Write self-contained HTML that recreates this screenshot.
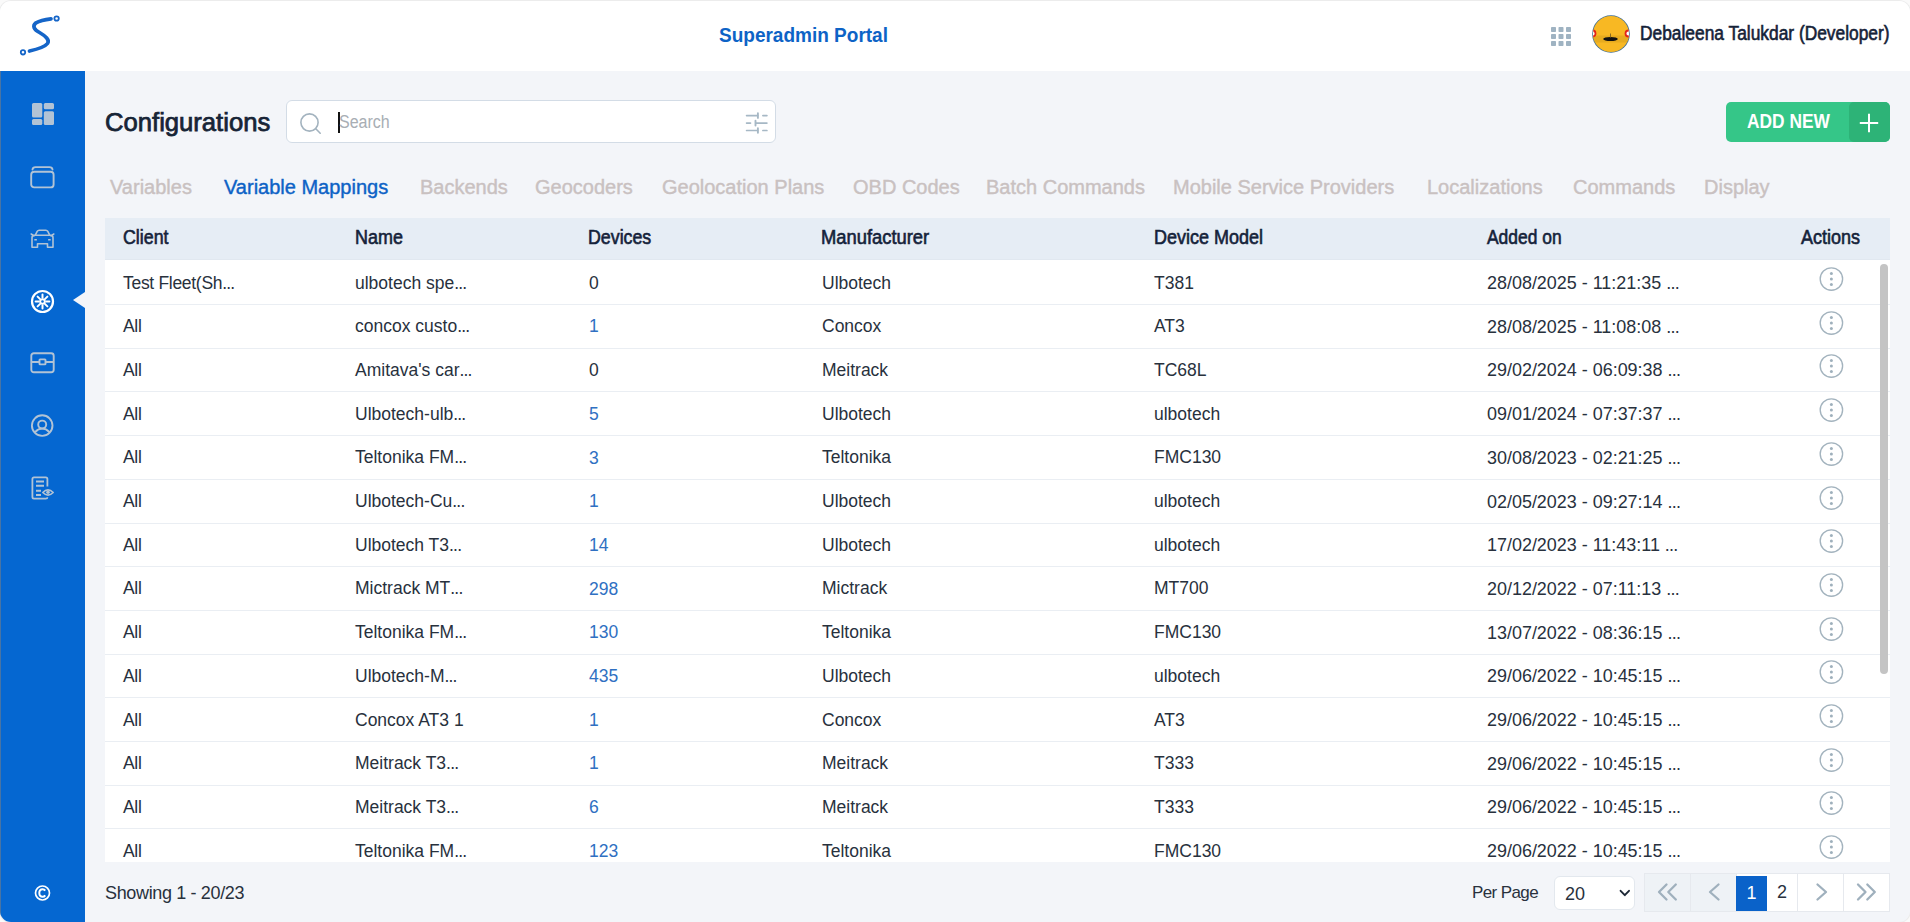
<!DOCTYPE html>
<html><head><meta charset="utf-8">
<style>
*{box-sizing:border-box;margin:0;padding:0}
html,body{width:1910px;height:922px;overflow:hidden;background:#fafafa;font-family:"Liberation Sans",sans-serif;color:#1f2a37}
#app{position:absolute;left:0;top:1px;width:1910px;height:921px;border-radius:11px;overflow:hidden;background:#f3f5f9;box-shadow:0 0 0 1px #ececec}
#hdr{position:absolute;left:0;top:0;width:1910px;height:70px;background:#fff}
#side{position:absolute;left:0;top:70px;width:85px;height:851px;background:#0567d1}
#ledge{position:absolute;left:0;top:70px;width:1px;height:851px;background:rgba(128,128,128,0.55)}
.abs{position:absolute;white-space:nowrap}
.title{left:719px;top:22px;font-size:21px;font-weight:bold;color:#0d63c6;transform:scaleX(0.905);transform-origin:0 0}
.uname{left:1640px;top:20.5px;font-size:19.5px;color:#152238;-webkit-text-stroke:0.6px #152238;transform:scaleX(0.89);transform-origin:0 0}
.conf{left:105px;top:106.8px;font-size:25px;color:#172436;-webkit-text-stroke:0.75px #172436;transform:scaleX(1.025);transform-origin:0 0}
#search{position:absolute;left:286px;top:99px;width:490px;height:42.5px;background:#fff;border:1px solid #d3dce6;border-radius:6px}
#addnew{position:absolute;left:1726px;top:100.5px;width:164px;height:40px;background:#35c688;border-radius:5px;overflow:hidden}
#addnew .t{position:absolute;left:20.5px;top:8.5px;font-size:19.5px;font-weight:bold;color:#fff;transform:scaleX(0.89);transform-origin:0 0}
#addnew .p{position:absolute;right:0;top:0;width:41px;height:40px;background:#2db377;border-radius:5px}
.tab{position:absolute;top:175px;font-size:20px;color:#c9c1c1;-webkit-text-stroke:0.4px #c9c1c1}
.tab.act{color:#0d62c6;-webkit-text-stroke:0.4px #0d62c6}
#thead{position:absolute;left:105px;top:217px;width:1785px;height:42px;background:#e6edf5;border-bottom:1px solid #e1e8f0}
.th{position:absolute;top:8px;font-size:19.5px;color:#14223a;-webkit-text-stroke:0.6px #14223a;transform-origin:0 0}
#tbody{position:absolute;left:105px;top:259px;width:1785px;height:602px;background:#fff;overflow:hidden}
.row{position:absolute;left:0;width:1785px;height:44px;border-bottom:1px solid #eaeef3}
.td{position:absolute;top:11.5px;font-size:17.5px;color:#28313d}
.td i{font-style:normal;letter-spacing:-0.8px}
.c6{font-size:19px;top:11px !important;transform:scaleX(0.944);transform-origin:0 0}
.c1{letter-spacing:-0.3px}
.td.b{color:#2f70c2}
.c1{left:18px}.c2{left:250px}.c3{left:484px;top:11.8px}.c4{left:717px}.c5{left:1049px}.c6{left:1382px}
.ai{position:absolute;left:1713px;top:5px}
#sb{position:absolute;left:1775px;top:4px;width:8px;height:410px;background:#c4c4c4;border-radius:4px}
.foot{position:absolute;font-size:17px;color:#28313d}
#sel{position:absolute;left:1554px;top:875px;width:81px;height:34px;background:#fff;border:1px solid #e3e8ee;border-radius:6px}
#pag{position:absolute;left:1644px;top:872px;width:246px;height:39px;border:1px solid #e6e9ee;background:#fff}
.pb{position:absolute;top:0;height:37px;border-right:1px solid #e6e9ee;text-align:center;font-size:18px;line-height:37px;color:#28313d}
.pb.dis{background:#eef2f6}
.pb.on{background:#0a62c9;color:#fff;top:2px;height:35px;line-height:34px;border-right:none}
</style></head>
<body>
<div id="app">
  <div id="hdr">
    <svg class="abs" style="left:0;top:0" width="80" height="70" viewBox="0 0 80 70">
      <path d="M29.5 50 C36 48.5 44.5 46.5 47.5 42.5 C50 39 45.5 35 39.5 31.5 C34 28.5 32 25 36 21.8 C40 19.5 45.5 18.5 51 17.8" fill="none" stroke="#1565c8" stroke-width="3.7" stroke-linecap="round"/>
      <circle cx="23" cy="51.3" r="2.2" fill="none" stroke="#1565c8" stroke-width="1.8"/>
      <circle cx="56.6" cy="17.5" r="2.2" fill="none" stroke="#1565c8" stroke-width="1.8"/>
    </svg>
    <div class="abs title">Superadmin Portal</div>
    <svg class="abs" style="left:1550.5px;top:24.5px" width="21" height="21" viewBox="0 0 21 21">
      <g fill="#9fb3c2">
        <rect x="0" y="1" width="5" height="5" rx="0.8"/><rect x="7.5" y="1" width="5" height="5" rx="0.8"/><rect x="15" y="1" width="5" height="5" rx="0.8"/>
        <rect x="0" y="8" width="5" height="5" rx="0.8"/><rect x="7.5" y="8" width="5" height="5" rx="0.8"/><rect x="15" y="8" width="5" height="5" rx="0.8"/>
        <rect x="0" y="15" width="5" height="5" rx="0.8"/><rect x="7.5" y="15" width="5" height="5" rx="0.8"/><rect x="15" y="15" width="5" height="5" rx="0.8"/>
      </g>
    </svg>
    <div class="abs" style="left:1592.5px;top:14.5px;width:36px;height:36px;border-radius:50%;overflow:hidden;background:#f8b823;box-shadow:0 0 0 0.8px #3d6c94">
      <svg class="abs" style="left:-1.5px;top:-1.5px" width="39" height="39" viewBox="0 0 39 39">
        <rect x="0" y="21.5" width="39" height="7" fill="#d9a01e" opacity="0.55"/>
        <ellipse cx="19.5" cy="25" rx="7.3" ry="2" fill="#111"/>
        <rect x="19" y="19.5" width="1" height="4" fill="#8a6a20"/>
        <circle cx="1.5" cy="19.5" r="3" fill="#fff" stroke="#e2231a" stroke-width="1.8"/>
        <circle cx="37.5" cy="19.5" r="3" fill="#fff" stroke="#e2231a" stroke-width="1.8"/>
      </svg></div>
    <div class="abs uname">Debaleena Talukdar (Developer)</div>
  </div>

  <div id="side">
    <svg class="abs" style="left:31px;top:31px" width="24" height="24" viewBox="0 0 24 24"><g fill="#b2c3d5">
      <rect x="1" y="1" width="10.3" height="14.4" rx="1.5"/><rect x="1" y="17" width="10.3" height="6" rx="1.5"/>
      <rect x="12.8" y="1" width="10.2" height="6.2" rx="1.5"/><rect x="12.8" y="9.2" width="10.2" height="13.8" rx="1.5"/></g></svg>
    <svg class="abs" style="left:30px;top:95px" width="25" height="24" viewBox="0 0 25 24"><g fill="none" stroke="#b2c3d5" stroke-width="1.9">
      <rect x="1.2" y="5.8" width="22.4" height="15.6" rx="3"/><path d="M2.5 3.5 Q2.8 1.1 5.5 1.1 H19.5 Q22.2 1.1 22.5 3.5" stroke-linecap="round"/></g></svg>
    <svg class="abs" style="left:30px;top:158px" width="25" height="20" viewBox="0 0 25 20"><g fill="none" stroke="#b2c3d5" stroke-width="1.6" stroke-linejoin="round">
      <path d="M5.2 6.3 L7.2 2.3 Q7.8 1.2 9.2 1.2 H15.8 Q17.2 1.2 17.8 2.3 L19.8 6.3"/>
      <path d="M2 8.8 Q2 6.3 4.5 6.3 H20.5 Q23 6.3 23 8.8 V18.2 H17.5 V14.8 H7.5 V18.2 H2 Z"/>
      <path d="M1.2 5 L4 6.8 M23.8 5 L21 6.8" stroke-linecap="round"/></g>
      <g fill="#b2c3d5"><rect x="4.2" y="9.9" width="2.8" height="1.7" rx=".7"/><rect x="18" y="9.9" width="2.8" height="1.7" rx=".7"/></g></svg>
    <svg class="abs" style="left:30px;top:218px" width="25" height="25" viewBox="0 0 25 25"><g fill="none" stroke="#fff">
      <circle cx="12.5" cy="12.5" r="10.5" stroke-width="2.2"/>
      <g stroke-width="2" stroke-linecap="round"><path d="M12.5 5.6 V8.8 M12.5 16.2 V19.4 M5.6 12.5 H8.8 M16.2 12.5 H19.4 M7.6 7.6 L9.9 9.9 M15.1 15.1 L17.4 17.4 M17.4 7.6 L15.1 9.9 M9.9 15.1 L7.6 17.4"/></g>
      <circle cx="12.5" cy="12.5" r="2.3" stroke-width="1.9"/></g></svg>
    <svg class="abs" style="left:30px;top:281px" width="25" height="23" viewBox="0 0 25 23"><g fill="none" stroke="#b2c3d5" stroke-width="1.9">
      <rect x="1.3" y="1.3" width="22.4" height="19" rx="2.5"/><path d="M1.3 10 H9.5 M15.5 10 H23.7"/><rect x="9.5" y="7.4" width="6" height="5" rx="0.6"/></g></svg>
    <svg class="abs" style="left:30px;top:343px" width="25" height="24" viewBox="0 0 25 24"><g fill="none" stroke="#b2c3d5" stroke-width="1.9">
      <circle cx="12.2" cy="11.6" r="10.3"/><circle cx="12.2" cy="10.6" r="4"/><path d="M4.8 18.3 Q12.2 10.8 19.6 18.3"/></g></svg>
    <svg class="abs" style="left:30px;top:405px" width="25" height="25" viewBox="0 0 25 25"><g fill="none" stroke="#b2c3d5" stroke-width="1.8" stroke-linejoin="round">
      <path d="M17.4 10.5 V3 Q17.4 1.4 15.8 1.4 H4 Q2.4 1.4 2.4 3 V21 Q2.4 22.6 4 22.6 H15.8 Q17.4 22.6 17.4 21.2"/>
      <path d="M6 5.5 H14 M6 9.8 H14 M6 14.7 H11 M6 19 H11" stroke-width="2"/>
      <path d="M12.8 16.5 Q18 11.2 23.2 16.5 Q18 21.8 12.8 16.5 Z" stroke-width="1.6"/></g>
      <circle cx="18" cy="16.3" r="1.8" fill="#b2c3d5"/></svg>
    <svg class="abs" style="left:34px;top:813px" width="17" height="17" viewBox="0 0 17 17"><g fill="none" stroke="#fff">
      <circle cx="8.5" cy="9" r="7" stroke-width="1.7"/><path d="M11.2 6.6 Q10.3 5.2 8.6 5.2 Q5.3 5.2 5.3 9 Q5.3 12.8 8.6 12.8 Q10.3 12.8 11.2 11.4" stroke-width="2"/></g></svg>
    <svg class="abs" style="left:73px;top:221px" width="12" height="16" viewBox="0 0 12 16"><path d="M12 0 L0 8 L12 16 Z" fill="#f3f5f9"/></svg>
  </div>

  <div id="ledge"></div>
  <div class="abs conf">Configurations</div>
  <div id="search">
    <svg class="abs" style="left:11px;top:10px" width="26" height="24" viewBox="0 0 26 24"><g fill="none" stroke="#a3b3bf" stroke-width="1.6" stroke-linecap="round"><circle cx="11.5" cy="11.5" r="8.6"/><path d="M17.8 17.8 L22.2 22.2"/></g></svg>
    <div class="abs" style="left:51px;top:10.5px;width:2px;height:21px;background:#111"></div>
    <div class="abs" style="left:52px;top:11px;font-size:18px;color:#a8aeb4;transform:scaleX(0.89);transform-origin:0 0">Search</div>
    <svg class="abs" style="left:458px;top:10.5px" width="24" height="23" viewBox="0 0 24 23"><g fill="none" stroke="#a6b8c5" stroke-linecap="round">
      <path d="M1.6 3.6 H12.6 M17.9 3.6 H21.9 M1.6 11.1 H5.5 M10.8 11.1 H21.9 M1.6 18.5 H12.6 M17.9 18.5 H21.9" stroke-width="1.7"/>
      <path d="M12.9 1.3 V5.9 M10.5 8.8 V13.5 M12.9 16.2 V20.8" stroke-width="1.9"/></g></svg>
  </div>
  <div id="addnew"><div class="t">ADD NEW</div><div class="p"><svg class="abs" style="left:9px;top:10px" width="22" height="22" viewBox="0 0 22 22"><path d="M11 1.8 V20.2 M1.8 11 H20.2" stroke="#fff" stroke-width="2"/></svg></div></div>

  <div class="tab" style="left:110px">Variables</div>
  <div class="tab act" style="left:224px">Variable Mappings</div>
  <div class="tab" style="left:420px">Backends</div>
  <div class="tab" style="left:535px">Geocoders</div>
  <div class="tab" style="left:662px">Geolocation Plans</div>
  <div class="tab" style="left:853px">OBD Codes</div>
  <div class="tab" style="left:986px">Batch Commands</div>
  <div class="tab" style="left:1173px">Mobile Service Providers</div>
  <div class="tab" style="left:1427px">Localizations</div>
  <div class="tab" style="left:1573px">Commands</div>
  <div class="tab" style="left:1704px">Display</div>

  <div id="thead">
    <div class="th" style="left:18px;transform:scaleX(0.912)">Client</div>
    <div class="th" style="left:250px;transform:scaleX(0.92)">Name</div>
    <div class="th" style="left:483px;transform:scaleX(0.912)">Devices</div>
    <div class="th" style="left:716px;transform:scaleX(0.941)">Manufacturer</div>
    <div class="th" style="left:1049px;transform:scaleX(0.923)">Device Model</div>
    <div class="th" style="left:1382px;transform:scaleX(0.893)">Added on</div>
    <div class="th" style="left:1696px;transform:scaleX(0.923)">Actions</div>
  </div>
  <div id="tbody"><div class="row" style="top:1.00px"><div class="td c1">Test Fleet(Sh<i>...</i></div><div class="td c2">ulbotech spe<i>...</i></div><div class="td c3">0</div><div class="td c4">Ulbotech</div><div class="td c5">T381</div><div class="td c6">28/08/2025 - 11:21:35 <i>...</i></div><svg class="ai" width="26" height="26" viewBox="0 0 26 26"><circle cx="13.4" cy="13" r="11.2" fill="none" stroke="#a3b3be" stroke-width="1.35"/><circle cx="13.4" cy="7.6" r="1.5" fill="#9fb0bc"/><circle cx="13.4" cy="13.1" r="1.5" fill="#9fb0bc"/><circle cx="13.4" cy="18.6" r="1.5" fill="#9fb0bc"/></svg></div>
<div class="row" style="top:44.70px"><div class="td c1">All</div><div class="td c2">concox custo<i>...</i></div><div class="td c3 b">1</div><div class="td c4">Concox</div><div class="td c5">AT3</div><div class="td c6">28/08/2025 - 11:08:08 <i>...</i></div><svg class="ai" width="26" height="26" viewBox="0 0 26 26"><circle cx="13.4" cy="13" r="11.2" fill="none" stroke="#a3b3be" stroke-width="1.35"/><circle cx="13.4" cy="7.6" r="1.5" fill="#9fb0bc"/><circle cx="13.4" cy="13.1" r="1.5" fill="#9fb0bc"/><circle cx="13.4" cy="18.6" r="1.5" fill="#9fb0bc"/></svg></div>
<div class="row" style="top:88.40px"><div class="td c1">All</div><div class="td c2">Amitava's car<i>...</i></div><div class="td c3">0</div><div class="td c4">Meitrack</div><div class="td c5">TC68L</div><div class="td c6">29/02/2024 - 06:09:38 <i>...</i></div><svg class="ai" width="26" height="26" viewBox="0 0 26 26"><circle cx="13.4" cy="13" r="11.2" fill="none" stroke="#a3b3be" stroke-width="1.35"/><circle cx="13.4" cy="7.6" r="1.5" fill="#9fb0bc"/><circle cx="13.4" cy="13.1" r="1.5" fill="#9fb0bc"/><circle cx="13.4" cy="18.6" r="1.5" fill="#9fb0bc"/></svg></div>
<div class="row" style="top:132.10px"><div class="td c1">All</div><div class="td c2">Ulbotech-ulb<i>...</i></div><div class="td c3 b">5</div><div class="td c4">Ulbotech</div><div class="td c5">ulbotech</div><div class="td c6">09/01/2024 - 07:37:37 <i>...</i></div><svg class="ai" width="26" height="26" viewBox="0 0 26 26"><circle cx="13.4" cy="13" r="11.2" fill="none" stroke="#a3b3be" stroke-width="1.35"/><circle cx="13.4" cy="7.6" r="1.5" fill="#9fb0bc"/><circle cx="13.4" cy="13.1" r="1.5" fill="#9fb0bc"/><circle cx="13.4" cy="18.6" r="1.5" fill="#9fb0bc"/></svg></div>
<div class="row" style="top:175.80px"><div class="td c1">All</div><div class="td c2">Teltonika FM<i>...</i></div><div class="td c3 b">3</div><div class="td c4">Teltonika</div><div class="td c5">FMC130</div><div class="td c6">30/08/2023 - 02:21:25 <i>...</i></div><svg class="ai" width="26" height="26" viewBox="0 0 26 26"><circle cx="13.4" cy="13" r="11.2" fill="none" stroke="#a3b3be" stroke-width="1.35"/><circle cx="13.4" cy="7.6" r="1.5" fill="#9fb0bc"/><circle cx="13.4" cy="13.1" r="1.5" fill="#9fb0bc"/><circle cx="13.4" cy="18.6" r="1.5" fill="#9fb0bc"/></svg></div>
<div class="row" style="top:219.50px"><div class="td c1">All</div><div class="td c2">Ulbotech-Cu<i>...</i></div><div class="td c3 b">1</div><div class="td c4">Ulbotech</div><div class="td c5">ulbotech</div><div class="td c6">02/05/2023 - 09:27:14 <i>...</i></div><svg class="ai" width="26" height="26" viewBox="0 0 26 26"><circle cx="13.4" cy="13" r="11.2" fill="none" stroke="#a3b3be" stroke-width="1.35"/><circle cx="13.4" cy="7.6" r="1.5" fill="#9fb0bc"/><circle cx="13.4" cy="13.1" r="1.5" fill="#9fb0bc"/><circle cx="13.4" cy="18.6" r="1.5" fill="#9fb0bc"/></svg></div>
<div class="row" style="top:263.20px"><div class="td c1">All</div><div class="td c2">Ulbotech T3<i>...</i></div><div class="td c3 b">14</div><div class="td c4">Ulbotech</div><div class="td c5">ulbotech</div><div class="td c6">17/02/2023 - 11:43:11 <i>...</i></div><svg class="ai" width="26" height="26" viewBox="0 0 26 26"><circle cx="13.4" cy="13" r="11.2" fill="none" stroke="#a3b3be" stroke-width="1.35"/><circle cx="13.4" cy="7.6" r="1.5" fill="#9fb0bc"/><circle cx="13.4" cy="13.1" r="1.5" fill="#9fb0bc"/><circle cx="13.4" cy="18.6" r="1.5" fill="#9fb0bc"/></svg></div>
<div class="row" style="top:306.90px"><div class="td c1">All</div><div class="td c2">Mictrack MT<i>...</i></div><div class="td c3 b">298</div><div class="td c4">Mictrack</div><div class="td c5">MT700</div><div class="td c6">20/12/2022 - 07:11:13 <i>...</i></div><svg class="ai" width="26" height="26" viewBox="0 0 26 26"><circle cx="13.4" cy="13" r="11.2" fill="none" stroke="#a3b3be" stroke-width="1.35"/><circle cx="13.4" cy="7.6" r="1.5" fill="#9fb0bc"/><circle cx="13.4" cy="13.1" r="1.5" fill="#9fb0bc"/><circle cx="13.4" cy="18.6" r="1.5" fill="#9fb0bc"/></svg></div>
<div class="row" style="top:350.60px"><div class="td c1">All</div><div class="td c2">Teltonika FM<i>...</i></div><div class="td c3 b">130</div><div class="td c4">Teltonika</div><div class="td c5">FMC130</div><div class="td c6">13/07/2022 - 08:36:15 <i>...</i></div><svg class="ai" width="26" height="26" viewBox="0 0 26 26"><circle cx="13.4" cy="13" r="11.2" fill="none" stroke="#a3b3be" stroke-width="1.35"/><circle cx="13.4" cy="7.6" r="1.5" fill="#9fb0bc"/><circle cx="13.4" cy="13.1" r="1.5" fill="#9fb0bc"/><circle cx="13.4" cy="18.6" r="1.5" fill="#9fb0bc"/></svg></div>
<div class="row" style="top:394.30px"><div class="td c1">All</div><div class="td c2">Ulbotech-M<i>...</i></div><div class="td c3 b">435</div><div class="td c4">Ulbotech</div><div class="td c5">ulbotech</div><div class="td c6">29/06/2022 - 10:45:15 <i>...</i></div><svg class="ai" width="26" height="26" viewBox="0 0 26 26"><circle cx="13.4" cy="13" r="11.2" fill="none" stroke="#a3b3be" stroke-width="1.35"/><circle cx="13.4" cy="7.6" r="1.5" fill="#9fb0bc"/><circle cx="13.4" cy="13.1" r="1.5" fill="#9fb0bc"/><circle cx="13.4" cy="18.6" r="1.5" fill="#9fb0bc"/></svg></div>
<div class="row" style="top:438.00px"><div class="td c1">All</div><div class="td c2">Concox AT3 1</div><div class="td c3 b">1</div><div class="td c4">Concox</div><div class="td c5">AT3</div><div class="td c6">29/06/2022 - 10:45:15 <i>...</i></div><svg class="ai" width="26" height="26" viewBox="0 0 26 26"><circle cx="13.4" cy="13" r="11.2" fill="none" stroke="#a3b3be" stroke-width="1.35"/><circle cx="13.4" cy="7.6" r="1.5" fill="#9fb0bc"/><circle cx="13.4" cy="13.1" r="1.5" fill="#9fb0bc"/><circle cx="13.4" cy="18.6" r="1.5" fill="#9fb0bc"/></svg></div>
<div class="row" style="top:481.70px"><div class="td c1">All</div><div class="td c2">Meitrack T3<i>...</i></div><div class="td c3 b">1</div><div class="td c4">Meitrack</div><div class="td c5">T333</div><div class="td c6">29/06/2022 - 10:45:15 <i>...</i></div><svg class="ai" width="26" height="26" viewBox="0 0 26 26"><circle cx="13.4" cy="13" r="11.2" fill="none" stroke="#a3b3be" stroke-width="1.35"/><circle cx="13.4" cy="7.6" r="1.5" fill="#9fb0bc"/><circle cx="13.4" cy="13.1" r="1.5" fill="#9fb0bc"/><circle cx="13.4" cy="18.6" r="1.5" fill="#9fb0bc"/></svg></div>
<div class="row" style="top:525.40px"><div class="td c1">All</div><div class="td c2">Meitrack T3<i>...</i></div><div class="td c3 b">6</div><div class="td c4">Meitrack</div><div class="td c5">T333</div><div class="td c6">29/06/2022 - 10:45:15 <i>...</i></div><svg class="ai" width="26" height="26" viewBox="0 0 26 26"><circle cx="13.4" cy="13" r="11.2" fill="none" stroke="#a3b3be" stroke-width="1.35"/><circle cx="13.4" cy="7.6" r="1.5" fill="#9fb0bc"/><circle cx="13.4" cy="13.1" r="1.5" fill="#9fb0bc"/><circle cx="13.4" cy="18.6" r="1.5" fill="#9fb0bc"/></svg></div>
<div class="row" style="top:569.10px"><div class="td c1">All</div><div class="td c2">Teltonika FM<i>...</i></div><div class="td c3 b">123</div><div class="td c4">Teltonika</div><div class="td c5">FMC130</div><div class="td c6">29/06/2022 - 10:45:15 <i>...</i></div><svg class="ai" width="26" height="26" viewBox="0 0 26 26"><circle cx="13.4" cy="13" r="11.2" fill="none" stroke="#a3b3be" stroke-width="1.35"/><circle cx="13.4" cy="7.6" r="1.5" fill="#9fb0bc"/><circle cx="13.4" cy="13.1" r="1.5" fill="#9fb0bc"/><circle cx="13.4" cy="18.6" r="1.5" fill="#9fb0bc"/></svg></div>
<div id="sb"></div></div>

  <div class="foot" style="left:105px;top:882px;font-size:18px;letter-spacing:-0.35px">Showing 1 - 20/23</div>
  <div class="foot" style="left:1472px;top:881.5px;letter-spacing:-0.6px">Per Page</div>
  <div id="sel"><div class="abs" style="left:10px;top:6.5px;font-size:18px;color:#28313d">20</div>
    <svg class="abs" style="left:63.5px;top:12px" width="12" height="9" viewBox="0 0 12 9"><path d="M1.6 1.8 L5.8 6.2 L10 1.8" fill="none" stroke="#1c2735" stroke-width="1.9" stroke-linecap="round" stroke-linejoin="round"/></svg></div>
  <div id="pag">
    <div class="pb dis" style="left:0;width:46px"><svg width="46" height="37" viewBox="0 0 46 37"><path d="M21.5 10.5 L14 18 L21.5 25.5 M30.8 10.5 L23.3 18 L30.8 25.5" fill="none" stroke="#9fb0bd" stroke-width="2.3" stroke-linecap="round" stroke-linejoin="round"/></svg></div>
    <div class="pb dis" style="left:46px;width:46px"><svg width="46" height="37" viewBox="0 0 46 37"><path d="M27.5 10.5 L19 18 L27.5 25.5" fill="none" stroke="#9fb0bd" stroke-width="2.3" stroke-linecap="round" stroke-linejoin="round"/></svg></div>
    <div class="pb on" style="left:91px;width:31px">1</div>
    <div class="pb" style="left:122px;width:31px">2</div>
    <div class="pb" style="left:153px;width:46px"><svg width="46" height="37" viewBox="0 0 46 37"><path d="M19.5 10.5 L28 18 L19.5 25.5" fill="none" stroke="#9fb0bd" stroke-width="2.3" stroke-linecap="round" stroke-linejoin="round"/></svg></div>
    <div class="pb" style="left:199px;width:46px"><svg width="46" height="37" viewBox="0 0 46 37"><path d="M14 10.5 L21.5 18 L14 25.5 M23.3 10.5 L30.8 18 L23.3 25.5" fill="none" stroke="#9fb0bd" stroke-width="2.3" stroke-linecap="round" stroke-linejoin="round"/></svg></div>
  </div>
</div>
</body></html>
